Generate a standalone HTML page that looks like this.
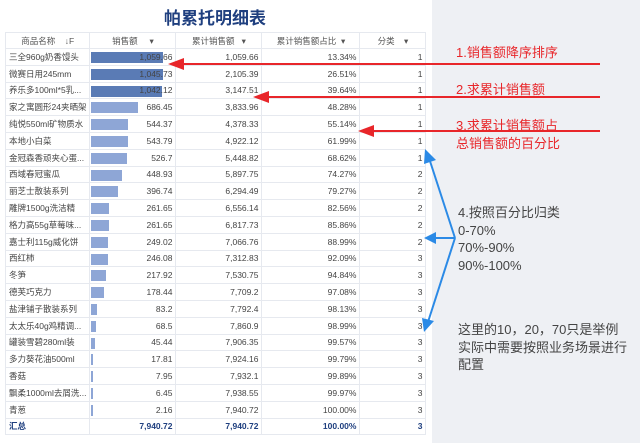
<!DOCTYPE html>
<html><head><meta charset="utf-8"><style>
*{margin:0;padding:0;box-sizing:border-box}
body{width:640px;height:443px;background:#fff;position:relative;overflow:hidden;font-family:"Liberation Sans","Noto Sans CJK SC",sans-serif}
#panel{position:absolute;left:432px;top:0;width:208px;height:443px;background:#eef0f4}
#title{position:absolute;left:0;width:430px;top:4px;text-align:center;font-size:17px;font-weight:bold;color:#1f3f7f}
table{position:absolute;left:5px;top:32px;border-collapse:collapse;font-size:8.5px;color:#444;table-layout:fixed}
td,th{height:16.8px;border-bottom:1px solid #e6e9ef;border-right:1px solid #e6e9ef;padding:0 3px;white-space:nowrap;overflow:hidden;font-weight:normal}
th{border-top:1px solid #e6e9ef;color:#555;position:relative;height:16px}
td{text-align:right}
td:first-child{text-align:left}
th:first-child,td:first-child{border-left:1px solid #e6e9ef}
.b{position:relative}
.bar{position:absolute;left:1px;top:3px;height:11px;background:#8ea6d6}
.bar.d{background:#5a7bb5}
.b span{position:relative}
tr.t td{color:#1f3f7f;font-weight:bold}
.a{position:absolute;font-size:13px;line-height:17.5px}
.r{color:#e8262a}.g{color:#444}
</style></head><body>
<div id="panel"></div>
<div id="title">帕累托明细表</div>
<table>
<colgroup><col style="width:84px"><col style="width:86px"><col style="width:86px"><col style="width:98px"><col style="width:66px"></colgroup>
<tr><th>商品名称 &nbsp;&nbsp;&nbsp;↓F</th><th>销售额 &nbsp;&nbsp;&nbsp;&nbsp;▾</th><th>累计销售额 &nbsp;&nbsp;▾</th><th>累计销售额占比 &nbsp;▾</th><th>分类 &nbsp;&nbsp;&nbsp;▾</th></tr>
<tbody id="tb"></tbody>
</table>
<script>
var d=[["三全960g奶香馒头","1,059.66","1,059.66","13.34%",1],["微赛日用245mm","1,045.73","2,105.39","26.51%",1],["养乐多100ml*5乳...","1,042.12","3,147.51","39.64%",1],["家之寓圆形24夹晒架","686.45","3,833.96","48.28%",1],["纯悦550ml矿物质水","544.37","4,378.33","55.14%",1],["本地小白菜","543.79","4,922.12","61.99%",1],["金冠森香顽夹心蛋...","526.7","5,448.82","68.62%",1],["西域春冠蜜瓜","448.93","5,897.75","74.27%",2],["丽芝士散装系列","396.74","6,294.49","79.27%",2],["雕牌1500g洗洁精","261.65","6,556.14","82.56%",2],["格力高55g草莓味...","261.65","6,817.73","85.86%",2],["嘉士利115g威化饼","249.02","7,066.76","88.99%",2],["西红柿","246.08","7,312.83","92.09%",3],["冬笋","217.92","7,530.75","94.84%",3],["德芙巧克力","178.44","7,709.2","97.08%",3],["盐津铺子散装系列","83.2","7,792.4","98.13%",3],["太太乐40g鸡精调...","68.5","7,860.9","98.99%",3],["罐装雪碧280ml装","45.44","7,906.35","99.57%",3],["多力葵花油500ml","17.81","7,924.16","99.79%",3],["香菇","7.95","7,932.1","99.89%",3],["飘柔1000ml去屑洗...","6.45","7,938.55","99.97%",3],["青葱","2.16","7,940.72","100.00%",3]];
var h="";d.forEach(function(r,i){var v=parseFloat(r[1].replace(",",""));var w=Math.max(1.5,v/1059.66*72);
h+="<tr><td>"+r[0]+"</td><td class='b'><div class='bar"+(i<3?" d":"")+"' style='width:"+w+"px'></div><span>"+r[1]+"</span></td><td>"+r[2]+"</td><td>"+r[3]+"</td><td>"+r[4]+"</td></tr>";});
h+="<tr class='t'><td>汇总</td><td>7,940.72</td><td>7,940.72</td><td>100.00%</td><td>3</td></tr>";
document.getElementById("tb").innerHTML=h;
</script>
<svg style="position:absolute;left:0;top:0" width="640" height="443">
<g fill="#e8262a" stroke="#e8262a">
<line x1="600" y1="64" x2="180" y2="64" stroke-width="2"/><polygon points="168,64 184,58 184,70" stroke="none"/>
<line x1="600" y1="97" x2="265" y2="97" stroke-width="2"/><polygon points="253,97 269,91 269,103" stroke="none"/>
<line x1="600" y1="131" x2="370" y2="131" stroke-width="2"/><polygon points="358,131 374,125 374,137" stroke="none"/>
</g>
<g fill="#2b8ae6" stroke="#2b8ae6" stroke-width="2">
<line x1="455" y1="238" x2="429" y2="158"/><polygon points="425,149 436,160 424,164" stroke="none"/>
<line x1="455" y1="238" x2="432" y2="238"/><polygon points="424,238 436,232 436,244" stroke="none"/>
<line x1="455" y1="238" x2="428" y2="322"/><polygon points="424,332 422,318 434,321" stroke="none"/>
</g>
</svg>
<div class="a r" style="left:456px;top:44px">1.销售额降序排序</div>
<div class="a r" style="left:456px;top:81px">2.求累计销售额</div>
<div class="a r" style="left:456px;top:117px">3.求累计销售额占<br>总销售额的百分比</div>
<div class="a g" style="left:458px;top:204px">4.按照百分比归类<br>0-70%<br>70%-90%<br>90%-100%</div>
<div class="a g" style="left:458px;top:321px">这里的10，20，70只是举例<br>实际中需要按照业务场景进行<br>配置</div>
</body></html>
